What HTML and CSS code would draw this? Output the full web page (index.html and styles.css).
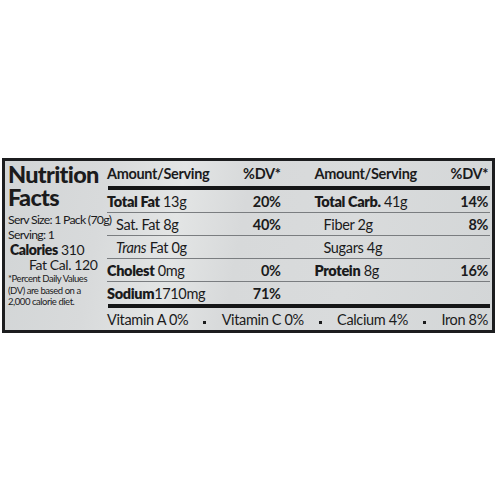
FILE: index.html
```html
<!DOCTYPE html>
<html>
<head>
<meta charset="utf-8">
<link rel="stylesheet" href="styles.css">
</head>
<body>
<div class="page">
  <div class="label">
    <div class="side">
      <div class="title">Nutrition<br>Facts</div>
      <div class="serv">Serv Size: 1 Pack (70g)</div>
      <div class="serv">Serving: 1</div>
      <div class="cal"><b>Calories</b> 310</div>
      <div class="cal indent">Fat Cal. 120</div>
      <div class="foot">*Percent Daily Values<br>(DV) are based on a<br>2,000 calorie diet.</div>
    </div>
    <div class="table">
      <div class="row head">
        <span class="lbl">Amount/Serving</span><span class="pct">%DV*</span><span></span>
        <span class="lbl">Amount/Serving</span><span class="pct">%DV*</span>
      </div>
      <div class="rule"></div>
      <div class="row">
        <span class="lbl"><b>Total Fat</b> 13g</span><span class="pct">20%</span><span></span>
        <span class="lbl"><b>Total Carb.</b> 41g</span><span class="pct">14%</span>
      </div>
      <div class="row">
        <span class="lbl sub">Sat. Fat 8g</span><span class="pct">40%</span><span></span>
        <span class="lbl sub">Fiber 2g</span><span class="pct">8%</span>
      </div>
      <div class="row">
        <span class="lbl sub"><i>Trans</i> Fat 0g</span><span class="pct"></span><span></span>
        <span class="lbl sub">Sugars 4g</span><span class="pct"></span>
      </div>
      <div class="row">
        <span class="lbl"><b>Cholest</b> 0mg</span><span class="pct">0%</span><span></span>
        <span class="lbl"><b>Protein</b> 8g</span><span class="pct">16%</span>
      </div>
      <div class="row last">
        <span class="lbl"><b>Sodium</b>1710mg</span><span class="pct">71%</span><span></span>
        <span class="lbl"></span><span class="pct"></span>
      </div>
      <div class="rule"></div>
      <div class="vits">
        <span>Vitamin A 0%</span><span class="dot"></span>
        <span>Vitamin C 0%</span><span class="dot"></span>
        <span>Calcium 4%</span><span class="dot"></span>
        <span>Iron 8%</span>
      </div>
    </div>
  </div>
</div>
</body>
</html>
```
FILE: styles.css
```css
html, body {
  margin: 0;
  padding: 0;
  background: #ffffff;
}
.page {
  width: 500px;
  height: 500px;
  padding-top: 158px;
  padding-left: 2px;
  box-sizing: border-box;
  font-family: "Lato", "Open Sans", sans-serif;
  color: #1b1b1c;
}
.label {
  width: 493px;
  height: 175px;
  box-sizing: border-box;
  border: 3px solid #1c1d1f;
  background: linear-gradient(100deg, #d2d5d6 0%, #d8dadb 20%, #e3e5e5 35%, #d7d9da 48%, #d9dbdc 70%, #d3d6d7 100%);
  display: flex;
}
.side {
  width: 101px;
  padding-left: 3px;
  padding-top: 2px;
  box-sizing: border-box;
  white-space: nowrap;
}
.title {
  font-weight: 900;
  font-size: 23.5px;
  line-height: 23px;
  letter-spacing: -0.7px;
  margin-bottom: 3px;
}
.serv {
  font-size: 12.3px;
  line-height: 15px;
  letter-spacing: -0.75px;
}
.cal {
  font-size: 14px;
  line-height: 15px;
  letter-spacing: -0.4px;
  padding-left: 2px;
}
.cal b { font-weight: 800; }
.cal.indent { padding-left: 21px; }
.foot {
  font-size: 9.5px;
  line-height: 11.5px;
  letter-spacing: -0.45px;
  margin-top: 1px;
}
.table {
  flex: 1;
  padding-left: 1px;
  padding-right: 2px;
  display: flex;
  flex-direction: column;
}
.row {
  display: grid;
  grid-template-columns: 1fr 40px 34px 1fr 40px;
  height: 21px;
  align-items: center;
  border-bottom: 1px solid #7a7d80;
  font-size: 14.5px;
  letter-spacing: -0.35px;
  padding-right: 2px;
  padding-top: 1px;
  box-sizing: content-box;
}
.row b { font-weight: 800; }
.row.head {
  height: 25px;
  padding-top: 0;
  border-bottom: none;
  font-weight: 700;
}
.row.last { border-bottom: none; height: 21px; }
.pct {
  text-align: right;
  font-weight: 700;
}
.sub { padding-left: 9px; }
.rule {
  height: 4px;
  background: #151617;
  margin-left: 1px;
}
.vits {
  flex: 1;
  display: flex;
  justify-content: space-between;
  align-items: center;
  font-size: 14.5px;
  letter-spacing: -0.35px;
  padding-right: 2px;
}
.dot {
  width: 3px;
  height: 3px;
  background: #1b1b1c;
  margin-top: 6px;
}
```
